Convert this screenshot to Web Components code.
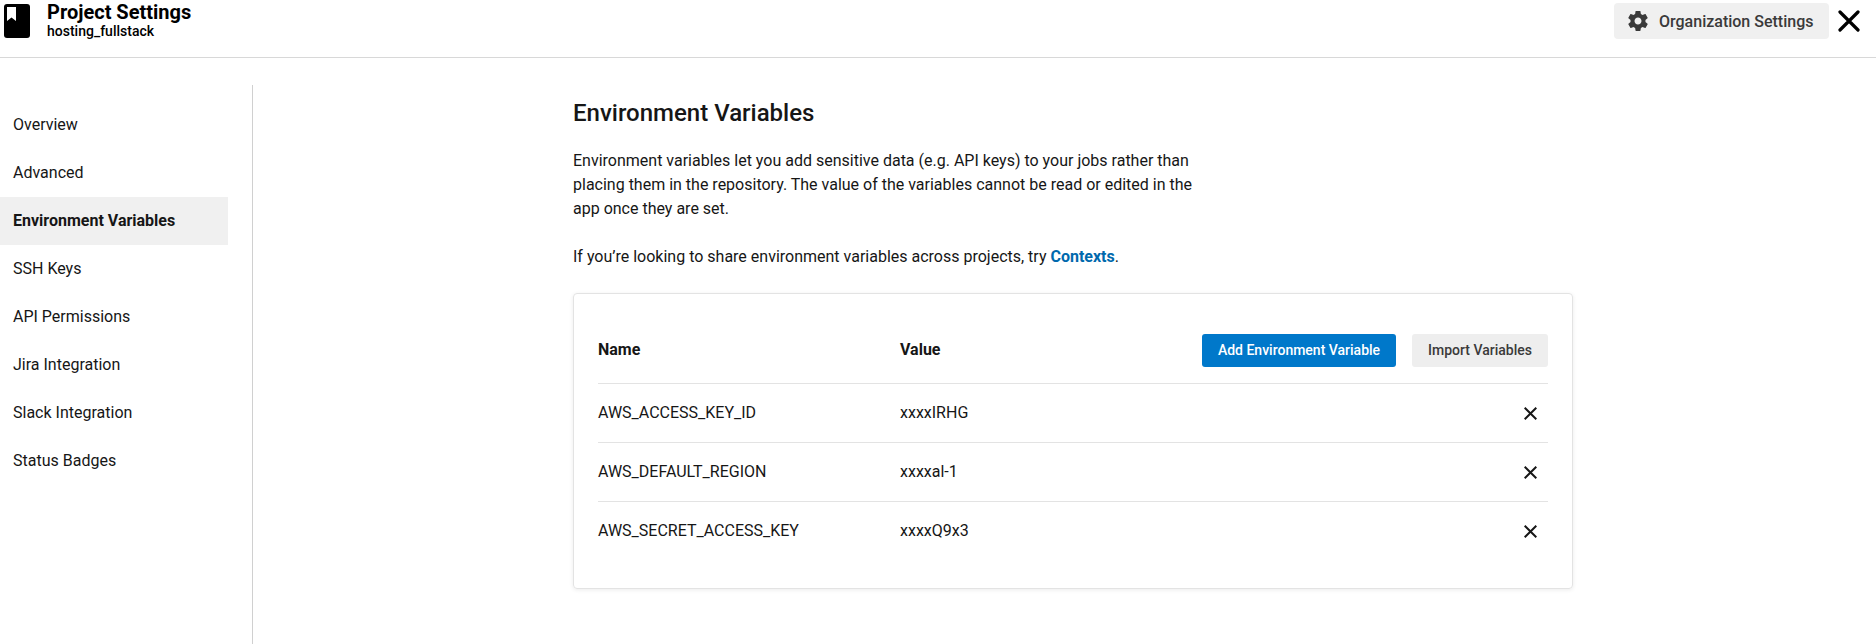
<!DOCTYPE html>
<html>
<head>
<meta charset="utf-8">
<style>
  html, body { margin: 0; height: 100%; overflow: hidden; background: #fff; }
  body { font-family: Roboto, "Liberation Sans", sans-serif; color: #161616; }
</style>
</head>
<body>
<settings-page>
  <settings-header slot="header" title="Project Settings" sub="hosting_fullstack"></settings-header>
  <settings-nav slot="nav" active="Environment Variables" items="Overview|Advanced|Environment Variables|SSH Keys|API Permissions|Jira Integration|Slack Integration|Status Badges"></settings-nav>
  <env-panel slot="main">
    <env-row name="AWS_ACCESS_KEY_ID" value="xxxxIRHG"></env-row>
    <env-row name="AWS_DEFAULT_REGION" value="xxxxal-1"></env-row>
    <env-row name="AWS_SECRET_ACCESS_KEY" value="xxxxQ9x3"></env-row>
  </env-panel>
</settings-page>

<script>
/////////////////////// 
////// Page shell //////
//////////////////////

class SettingsPage extends HTMLElement {
    constructor() {
        super();
        this.attachShadow({ mode: 'open' });
        this.shadowRoot.innerHTML = `
            <style>
                :host { display: flex; flex-direction: column; height: 644px; }
                .body { flex: 1; display: flex; min-height: 0; padding-top: 27px; }
                .main { flex: 1; padding: 14px 0 0 320px; }
            </style>
            <slot name="header"></slot>
            <div class="body">
                <slot name="nav"></slot>
                <div class="main"><slot name="main"></slot></div>
            </div>
        `;
    }
}
customElements.define('settings-page', SettingsPage);

/////////////////////// 
////// Header //////
//////////////////////

class SettingsHeader extends HTMLElement {
    constructor() {
        super();
        this.attachShadow({ mode: 'open' });
        this.shadowRoot.innerHTML = `
            <style>
                :host { display: flex; align-items: flex-start; height: 57px; border-bottom: 1px solid #d8d8d8; box-sizing: content-box; }
                .book { margin: 4px 0 0 4px; width: 26px; height: 34px; display: block; }
                .titles { margin-left: 17px; }
                .title { font-size: 20px; font-weight: 700; line-height: 24px; color: #000; }
                .sub { font-size: 14px; font-weight: 500; line-height: 16px; margin-top: -1px; color: #000; }
                .right { margin-left: auto; display: flex; align-items: flex-start; }
                .org { margin-top: 3px; width: 215px; height: 36px; box-sizing: border-box; display: flex; align-items: center;
                       padding-left: 12px; gap: 9px; background: #f0f0f0; border-radius: 4px;
                       font-size: 16px; font-weight: 500; color: #3a3a3a; }
                .org svg { width: 24px; height: 24px; }
                .close { margin: 10px 16px 0 9px; width: 22px; height: 22px; display: block; }
            </style>
            <svg class="book" viewBox="0 0 26 34">
                <path fill="#000" d="M3 0H23a3 3 0 0 1 3 3V31a3 3 0 0 1-3 3H3a3 3 0 0 1-3-3V3a3 3 0 0 1 3-3Z"/>
                <path fill="#fff" d="M3 3H12V17L7.5 13.5 3 17Z"/>
            </svg>
            <div class="titles">
                <div class="title">${this.getAttribute('title')}</div>
                <div class="sub">${this.getAttribute('sub')}</div>
            </div>
            <div class="right">
                <div class="org">
                    <svg viewBox="0 0 24 24"><path fill="#3a3a3a" d="M19.43 12.98c.04-.32.07-.64.07-.98s-.03-.66-.07-.98l2.11-1.65c.19-.15.24-.42.12-.64l-2-3.46c-.12-.22-.39-.3-.61-.22l-2.49 1c-.52-.4-1.08-.73-1.69-.98l-.38-2.65C14.46 2.18 14.25 2 14 2h-4c-.25 0-.46.18-.49.42l-.38 2.65c-.61.25-1.17.59-1.69.98l-2.49-1c-.23-.09-.49 0-.61.22l-2 3.46c-.13.22-.07.49.12.64l2.11 1.65c-.04.32-.07.65-.07.98s.03.66.07.98l-2.11 1.65c-.19.15-.24.42-.12.64l2 3.46c.12.22.39.3.61.22l2.49-1c.52.4 1.08.73 1.69.98l.38 2.65c.03.24.24.42.49.42h4c.25 0 .46-.18.49-.42l.38-2.65c.61-.25 1.17-.59 1.69-.98l2.49 1c.23.09.49 0 .61-.22l2-3.46c.12-.22.07-.49-.12-.64l-2.11-1.65zM12 15.5c-1.93 0-3.5-1.57-3.5-3.5s1.57-3.5 3.5-3.5 3.5 1.57 3.5 3.5-1.57 3.5-3.5 3.5z"/></svg>
                    <span>Organization Settings</span>
                </div>
                <svg class="close" viewBox="0 0 22 22"><path d="M2 2L20 20M20 2L2 20" stroke="#000" stroke-width="3.2" stroke-linecap="round" fill="none"/></svg>
            </div>
        `;
    }
}
customElements.define('settings-header', SettingsHeader);

/////////////////////// 
////// Sidebar //////
//////////////////////

class SettingsNav extends HTMLElement {
    constructor() {
        super();
        this.attachShadow({ mode: 'open' });
        const active = this.getAttribute('active');
        const links = this.getAttribute('items').split('|').map(item => {
            const cls = item === active ? 'item on' : 'item';
            return `<div class="${cls}">${item}</div>`;
        }).join('');
        this.shadowRoot.innerHTML = `
            <style>
                :host { display: block; width: 252px; flex: none; border-right: 1px solid #d0d0d0; padding-top: 16px; box-sizing: content-box; }
                .list { width: 228px; }
                .item { height: 48px; line-height: 48px; padding-left: 13px; font-size: 16px; color: #161616; }
                .on { background: #f0f0f0; font-weight: 700; }
            </style>
            <div class="list">${links}</div>
        `;
    }
}
customElements.define('settings-nav', SettingsNav);

/////////////////////// 
////// Env panel //////
//////////////////////

class EnvPanel extends HTMLElement {
    constructor() {
        super();
        this.attachShadow({ mode: 'open' });
        this.shadowRoot.innerHTML = `
            <style>
                :host { display: block; width: 1000px; }
                h1 { margin: 0; font-size: 24px; font-weight: 500; line-height: 28px; color: #161616; }
                p { margin: 0; width: 620px; font-size: 16px; line-height: 24px; color: #161616; }
                .intro { margin-top: 22px; }
                .ctx { margin-top: 24px; }
                a { color: #0069ad; font-weight: 700; text-decoration: none; }
                .card { margin-top: 24px; height: 296px; box-sizing: border-box; border: 1px solid #e3e3e3; border-radius: 4px;
                        box-shadow: 0 1px 4px rgba(0,0,0,.08); padding: 40px 24px 0; }
                .head { display: flex; align-items: flex-start; height: 49px; border-bottom: 1px solid #e3e3e3; }
                .col { font-size: 16px; font-weight: 700; line-height: 31px; color: #161616; }
                .col.name { width: 302px; }
                .btns { margin-left: auto; display: flex; gap: 16px; }
                .btn { height: 33px; line-height: 33px; text-align: center; border-radius: 3px; font-size: 14px; font-weight: 500; }
                .add { width: 194px; background: #0078ca; color: #fff; }
                .imp { width: 136px; background: #eeeeee; color: #3a3a3a; }
            </style>
            <h1>Environment Variables</h1>
            <p class="intro">Environment variables let you add sensitive data (e.g. API keys) to your jobs rather than placing them in the repository. The value of the variables cannot be read or edited in the app once they are set.</p>
            <p class="ctx">If you’re looking to share environment variables across projects, try <a>Contexts</a>.</p>
            <div class="card">
                <div class="head">
                    <div class="col name">Name</div>
                    <div class="col">Value</div>
                    <div class="btns">
                        <div class="btn add">Add Environment Variable</div>
                        <div class="btn imp">Import Variables</div>
                    </div>
                </div>
                <slot></slot>
            </div>
        `;
    }
}
customElements.define('env-panel', EnvPanel);

class EnvRow extends HTMLElement {
    constructor() {
        super();
        this.attachShadow({ mode: 'open' });
        this.shadowRoot.innerHTML = `
            <style>
                :host { display: flex; align-items: center; height: 59px; font-size: 16px; color: #161616; box-sizing: border-box; border-bottom: 1px solid #e3e3e3; }
                :host(:last-child) { border-bottom: 0; }
                .name { width: 302px; }
                .name, .val { padding-bottom: 2px; }
                svg { margin-left: auto; margin-right: 11px; width: 13px; height: 13px; }
            </style>
            <div class="name">${this.getAttribute('name')}</div>
            <div class="val">${this.getAttribute('value')}</div>
            <svg viewBox="0 0 13 13"><path d="M.7 .7L12.3 12.3M12.3 .7L.7 12.3" stroke="#161616" stroke-width="2" fill="none"/></svg>
        `;
    }
}
customElements.define('env-row', EnvRow);
</script>
</body>
</html>
